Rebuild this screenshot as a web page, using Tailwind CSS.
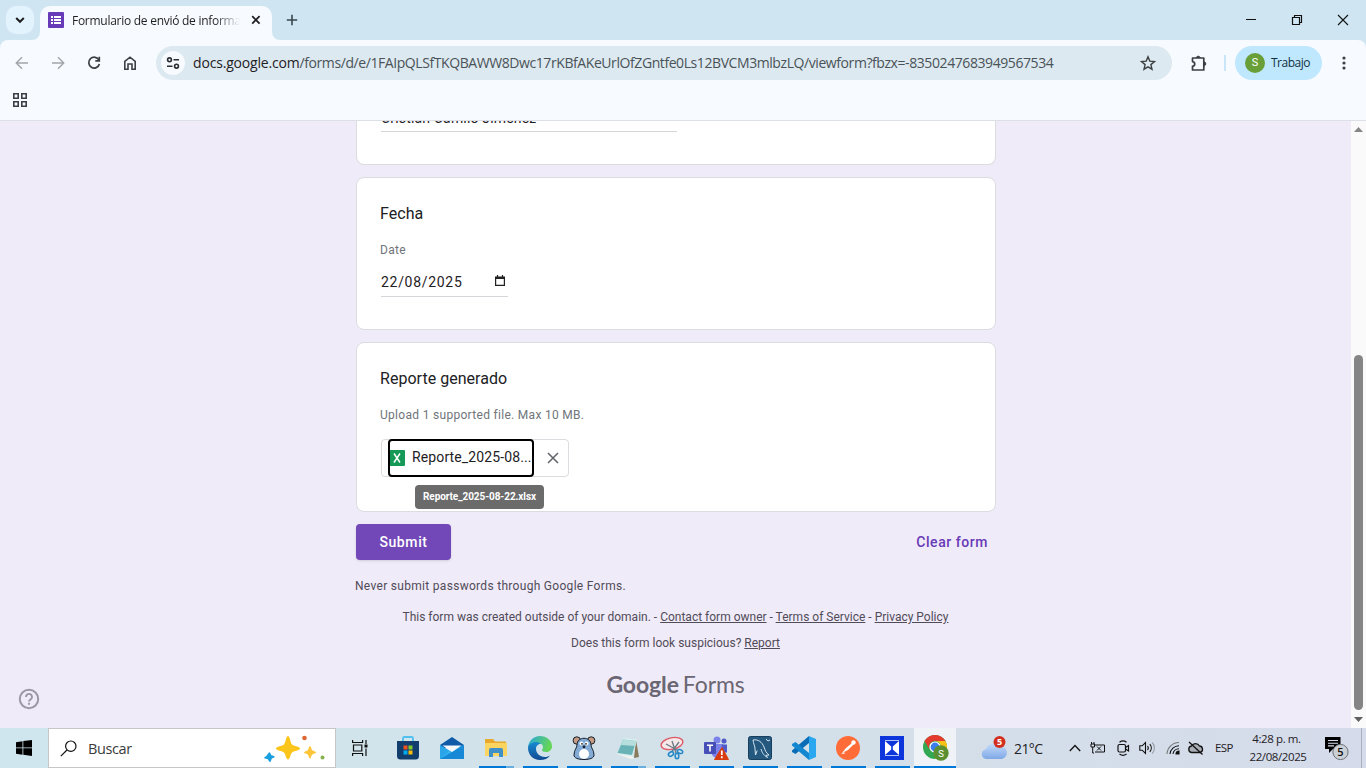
<!DOCTYPE html>
<html lang="es">
<head>
<meta charset="utf-8">
<title>Formulario de envió de información</title>
<script src="https://cdn.jsdelivr.net/npm/@tailwindcss/browser@4"></script>
</head>
<body class="w-[1366px] h-[768px] overflow-hidden flex flex-col bg-[#f0ebf8] font-['Open_Sans',sans-serif] text-[#1f2124]">

<!-- Tab strip -->
<header class="h-10 shrink-0 bg-[#cfe6f2] flex items-start">
  <div class="w-10 pl-1.5 pt-1.5">
    <div class="size-7 rounded-[10px] bg-[#e2f3fe] flex items-center justify-center">
      <svg width="10" height="8" viewBox="0 0 10 8" fill="none" stroke="#1f1f1f" stroke-width="2"><path d="M1.2 2 5 5.8 8.8 2"/></svg>
    </div>
  </div>
  <div class="relative w-[232px] h-[34px] mt-1.5 rounded-t-[10px] bg-[#f7fafe] flex items-center pl-2 pb-1.5">
    <svg class="absolute -left-2 bottom-0" width="8" height="8"><path d="M8 0v8H0a8 8 0 0 0 8-8z" fill="#f7fafe"/></svg>
    <svg class="absolute -right-2 bottom-0" width="8" height="8"><path d="M0 0v8h8a8 8 0 0 1-8-8z" fill="#f7fafe"/></svg>
    <svg width="16" height="16" viewBox="0 0 16 16"><rect width="16" height="16" rx="1" fill="#673ab7"/><path d="M3 4h2v2H3zM6 4h7v2H6zM3 7h2v2H3zM6 7h7v2H6zM3 10h2v2H3zM6 10h7v2H6z" fill="#fff"/></svg>
    <div class="ml-2 w-[168px] overflow-hidden whitespace-nowrap text-[12px] leading-4 pt-px tracking-[-0.27px] bg-linear-to-r from-[#1f1f1f] from-85% to-transparent bg-clip-text text-transparent">Formulario de envió de informa</div>
    <svg class="ml-[11px]" width="10" height="10" viewBox="0 0 10 10" stroke="#1f1f1f" stroke-width="1.8"><path d="M1.2 1.2l7.4 7.4M8.6 1.2 1.2 8.600"/></svg>
  </div>
  <svg class="ml-[14px] mt-[14px]" width="12" height="12" viewBox="0 0 12 12" stroke="#3a474e" stroke-width="1.6"><path d="M6 .8v10.400M.8 6h10.400"/></svg>
  <div class="ml-auto flex items-center mt-[14px] mr-[17px] gap-[34px]">
    <svg width="12" height="12" stroke="#111" stroke-width="1"><path d="M1 5.500h10"/></svg>
    <svg width="12" height="12" fill="none" stroke="#111" stroke-width="1.2"><path d="M1.500 3.500h7v7h-7zM3.500 3.500v-2h7v7h-2"/></svg>
    <svg width="12" height="12" stroke="#111" stroke-width="1.1"><path d="M1 1l10 10M11 1 1 11"/></svg>
  </div>
</header>

<!-- Toolbar -->
<div class="h-20 shrink-0 bg-[#cfe6f2]">
  <div class="h-20 rounded-t-lg bg-[#f7fafe] flex flex-col">
    <div class="h-[46px] flex items-center pl-[14px] pr-4">
      <svg width="16" height="16" viewBox="0 0 16 16" fill="none" stroke="#a3a7ac" stroke-width="1.5"><path d="M14 8H2.500M8 2.300 2.300 8 8 13.700"/></svg>
      <svg class="ml-5" width="16" height="16" viewBox="0 0 16 16" fill="none" stroke="#a3a7ac" stroke-width="1.5"><path d="M2 8h11.500M8 2.300 13.700 8 8 13.700"/></svg>
      <svg class="ml-5" width="16" height="16" viewBox="0 0 16 16" fill="none" stroke="#3c4043" stroke-width="1.7"><path d="M13 5.200A5.400 5.400 0 1 0 13.400 9"/><path d="M13.300 1.800v4h-4"/></svg>
      <svg class="ml-5" width="16" height="16" viewBox="0 0 16 16" fill="none" stroke="#3c4043" stroke-width="1.6"><path d="M2.800 6.300 8 2.200l5.200 4.100v7.900H10V9H6v5.200H2.800z"/></svg>
      <div class="ml-[18px] w-[1016px] h-[34px] rounded-full bg-[#dde9f0] flex items-center pl-1 pr-4">
        <div class="size-6 ml-px rounded-full bg-[#f7fafe] flex items-center justify-center">
          <svg width="14" height="14" viewBox="0 0 14 14" fill="none" stroke="#2b2f33" stroke-width="1.600"><circle cx="3.500" cy="3.800" r="1.900"/><path d="M7.500 3.800H13M1 10.200h5.500"/><circle cx="10.500" cy="10.200" r="1.900"/></svg>
        </div>
        <div class="ml-2 whitespace-nowrap text-[14px] leading-5 text-[#4a5358] tracking-[-0.42px]"><span class="text-[#1f2124] tracking-[-0.18px]">docs.google.com</span>/forms/d/e/1FAIpQLSfTKQBAWW8Dwc17rKBfAKeUrlOfZGntfe0Ls12BVCM3mlbzLQ/viewform?fbzx=-8350247683949567534</div>
        <svg class="ml-auto" width="16" height="16" viewBox="0 0 16 16" fill="none" stroke="#3c4043" stroke-width="1.400"><path d="M8 1.800l1.800 4.300 4.700.4-3.600 3.100 1.100 4.600L8 11.800l-4 2.400 1.100-4.600-3.600-3.100 4.700-.4z"/></svg>
      </div>
      <svg class="ml-[18px]" width="18" height="18" viewBox="0 0 18 18" fill="none" stroke="#3c4043" stroke-width="1.700" stroke-linejoin="round"><path d="M2.500 4h11.300v12H2.500v-3.700c3-.5 3-4.200 0-4.700z"/><path d="M6.200 3.500a2.200 2.200 0 0 1 4 0zM14.500 7.800a2.200 2.200 0 0 1 0 4z" fill="#3c4043" stroke-width="1"/></svg>
      <div class="ml-[16px] w-[2px] h-4 bg-[#c9e6f8]"></div>
      <div class="ml-[9px] w-[87px] h-[34px] rounded-full bg-[#bfe8ff] flex items-center pl-[10px]">
        <div class="size-5 rounded-full bg-[#689f38] text-white text-[11px] leading-5 text-center font-['Roboto',sans-serif]">S</div>
        <div class="ml-1.5 text-[12px] leading-4 tracking-[-0.5px] text-[#123042]">Trabajo</div>
      </div>
      <svg class="ml-[20px]" width="4" height="16" fill="#3c4043"><circle cx="2" cy="3" r="1.600"/><circle cx="2" cy="8" r="1.600"/><circle cx="2" cy="13" r="1.600"/></svg>
    </div>
    <div class="h-[34px] pl-[13px] pt-[7px]">
      <svg width="14" height="14" fill="none" stroke="#3c4043" stroke-width="1.600"><path d="M.8.800h4.400v4.400H.8zM8.800.800h4.400v4.400H8.800zM.8 8.800h4.400v4.400H.8zM8.800 8.800h4.400v4.400H8.800z"/></svg>
    </div>
  </div>
</div>
<div class="h-px shrink-0 bg-[#dcdfe6]"></div>

<!-- Page -->
<div class="h-[607px] shrink-0 flex">
  <div class="flex-1 flex font-['Roboto',sans-serif]">
    <div class="w-[356px] flex items-end pl-[18px] pb-[18px]">
      <svg width="22" height="22" viewBox="0 0 22 22" fill="none" stroke="#9b97a4" stroke-width="2"><circle cx="11" cy="11" r="9.200"/><path d="M8 9a3 3 0 1 1 4.800 2.300c-1.100.8-1.800 1.300-1.800 2.300" stroke-width="1.900"/><path d="M11 14.800v2"/></svg>
    </div>
    <main class="w-[640px] flex flex-col">
      <section class="h-11 rounded-b-lg border border-t-0 border-[#dadce0] bg-white px-6 overflow-hidden">
        <div class="w-[296px] h-[11px] border-b border-[#d5d6da] flex items-end"><div class="text-[14px] leading-5 tracking-[0.17px] whitespace-nowrap mb-[3px]">Cristian Camilo Jiménez</div></div>
      </section>
      <section class="mt-3 h-[153px] rounded-lg border border-[#dadce0] bg-white px-6 pt-6">
        <h2 class="-ml-px text-[16px] leading-6 tracking-[0.05px] text-[#202124]">Fecha</h2>
        <div class="-ml-px mt-4 text-[12px] leading-4 tracking-[0.3px] text-[#70757a]">Date</div>
        <div class="mt-2 w-[127px] h-[31px] border-b border-[#d5d6da] flex items-center justify-between pr-[3px] pt-0.5">
          <span class="text-[14px] leading-5 tracking-[0.7px]">22/08/2025</span>
          <svg class="mb-1" width="10" height="11" viewBox="0 0 10 11" fill="none" stroke="#222" stroke-width="1.200"><path d="M.6 2h8.800v8.400H.6z"/><path d="M.6 3h8.800" stroke-width="2"/><path d="M2.500 0v2M7.500 0v2"/></svg>
        </div>
      </section>
      <section class="mt-3 h-[170px] rounded-lg border border-[#dadce0] bg-white px-6 pt-6">
        <h2 class="-ml-px text-[16px] leading-6 tracking-[0.03px] text-[#202124]">Reporte generado</h2>
        <div class="-ml-px mt-4 text-[12px] leading-4 tracking-[0.3px] text-[#70757a]">Upload 1 supported file. Max 10 MB.</div>
        <div class="relative mt-4 w-[188px] h-[38px] rounded border border-[#dadce0] flex items-center pl-1.5">
          <div class="w-[146px] h-[38px] -my-px rounded border-2 border-black flex items-center">
            <svg class="shrink-0" width="15" height="16" viewBox="0 0 15 16"><path d="M0 0h14a1 1 0 0 1 1 1v14a1 1 0 0 1-1 1H0z" fill="#159957"/><path d="M4 3.500l6 9M10 3.500l-6 9" stroke="#fff" stroke-width="1.500"/></svg>
            <span class="ml-[7px] mb-0.5 text-[14px] leading-5 tracking-[0.12px] whitespace-nowrap">Reporte_2025-08...</span>
          </div>
          <svg class="ml-[13px]" width="12" height="12" stroke="#5f6368" stroke-width="1.500"><path d="M1 1l10 10M11 1 1 11"/></svg>
          <div class="absolute left-[33px] top-[45px] w-[129px] h-6 rounded-sm bg-[#6b6b6b] text-white text-center text-[10px] leading-6 font-bold tracking-[-0.08px]">Reporte_2025-08-22.xlsx</div>
        </div>
      </section>
      <div class="mt-3 h-9 flex justify-between items-center">
        <div class="w-[95px] h-9 rounded bg-[#7248b9] shadow-sm text-white text-center text-[14px] leading-9 font-medium tracking-[0.6px]">Submit</div>
        <div class="pr-2 text-[14px] leading-5 font-medium tracking-[0.55px] text-[#673ab7]">Clear form</div>
      </div>
      <div class="-ml-px mt-[18px] text-[12px] leading-4 tracking-[0.3px] text-[#504c59]">Never submit passwords through Google Forms.</div>
      <div class="-ml-px mt-[15px] text-center text-[12px] leading-4 text-[#504c59]">This form was created outside of your domain. - <span class="underline">Contact form owner</span> - <span class="underline">Terms of Service</span> - <span class="underline">Privacy Policy</span></div>
      <div class="-ml-px mt-[10px] text-center text-[12px] leading-4 text-[#504c59]">Does this form look suspicious? <span class="underline">Report</span></div>
      <div class="-ml-px mt-[17px] flex justify-center items-baseline gap-1 text-[#6a6673] text-[23px] leading-8"><span class="font-['Lato',sans-serif] font-bold tracking-[-0.1px]">Google</span><span class="font-['Lato',sans-serif] tracking-[-0.1px]">Forms</span></div>
    </main>
  </div>
  <div class="w-[15px] bg-[#fafafb] flex flex-col items-center pt-1.5 pb-1">
    <svg width="9" height="5" fill="#858585"><path d="M0 5 4.500 0 9 5z"/></svg>
    <div class="mt-[223px] w-[9px] h-[355px] rounded-full bg-[#858585]"></div>
    <svg class="mt-auto mb-[2px]" width="9" height="5" fill="#606060"><path d="M0 0h9L4.500 5z"/></svg>
  </div>
</div>

<!-- Taskbar -->
<footer class="h-10 shrink-0 flex bg-linear-to-r from-[#cfe6ee] via-[#d3e1e9] to-[#d5dbea]">
  <div class="w-12 flex items-center justify-center">
    <svg width="16" height="16" viewBox="0 0 16 16"><path d="M0 2.200 6.500 1.200v6.300H0zM7.300 1.100 16 0v7.500H7.300zM0 8.300h6.500v6.400L0 13.700zM7.300 8.300H16V16l-8.700-1.200z"/></svg>
  </div>
  <div class="w-72 h-10 bg-white border border-[#c4c6c8] flex items-center pl-[11px]">
    <svg width="17" height="17" viewBox="0 0 17 17" fill="none" stroke="#111" stroke-width="1.200"><circle cx="10.800" cy="6.200" r="5.200"/><path d="M7 10 .8 16.200"/></svg>
    <span class="ml-[11px] pt-0.5 text-[14.500px] tracking-[-0.4px] text-[#3a3a3a]">Buscar</span>
    <svg class="ml-auto mr-[9px]" width="62" height="28" viewBox="0 0 62 28"><path d="M24 2c2 0 2.500 7 4 8.500s8 2 8 4-6.500 2.500-8 4-2 7-4 7-2.500-5.500-4-7-8-2-8-4 6.500-2.500 8-4S22 2 24 2z" fill="#fcc51b"/><path d="M46 12c1 0 1.500 3.500 2.200 4.200S52 17.500 52 18.500s-3 1.300-3.800 2S47 24.500 46 24.500s-1.400-3.300-2.200-4-3.800-1-3.800-2 3-1.500 3.800-2.300S45 12 46 12z" fill="#fdc537"/><path d="M5.500 19l1.300 2.800 3 1-2.600 1.400-1.200 3-1.800-2.600-3.200-.8 2.200-1.800z" fill="#1a9fe0" stroke="#1a9fe0" stroke-linejoin="round" stroke-width="1.500"/><circle cx="40.500" cy="4" r="2.300" fill="#dd6632"/><circle cx="58.500" cy="23.500" r="2" fill="#86b24c"/></svg>
  </div>
  <div class="w-12 mr-0.5 flex items-center justify-center">
    <svg width="16" height="16" viewBox="0 0 16 16" fill="none" stroke="#111" stroke-width="1.200"><path d="M.6 0v2.500h10V0M.6 16v-2.500h10V16M1.500 5h8.300v6H1.500zM14 0v4M14 8.500V16"/><path d="M12.500 4.500h3v3h-3z" fill="#111" stroke="none"/></svg>
  </div>
  <div class="flex">
    <!-- Store -->
    <div class="w-11 flex items-center justify-center"><svg width="24" height="24" viewBox="0 0 24 24"><path d="M7 6V2.500A1.500 1.500 0 0 1 8.500 1h7A1.500 1.500 0 0 1 17 2.500V6" fill="none" stroke="#4fc0ee" stroke-width="1.800"/><path d="M1 5h22v15a3.500 3.500 0 0 1-3.500 3.500h-15A3.500 3.500 0 0 1 1 20z" fill="#123e6e"/><path d="M7.500 9.500h4v4h-4z" fill="#f1511b"/><path d="M12.500 9.500h4v4h-4z" fill="#80cc28"/><path d="M7.500 14.500h4v4h-4z" fill="#00adef"/><path d="M12.500 14.500h4v4h-4z" fill="#fbbc09"/></svg></div>
    <!-- Mail -->
    <div class="w-11 flex items-center justify-center"><svg width="24" height="24" viewBox="0 0 24 24"><path d="M0 9 12 1l12 8-2 3H2z" fill="#105ba8"/><path d="M0 9l24 14H0z" fill="#2aa5e8"/><path d="M24 9v14H0l9-8z" fill="#33b2ef"/><path d="M0 23 24 9v14z" fill="#1688d6"/><path d="M2.500 9.500h19L12 16z" fill="#f4f8fb"/></svg></div>
    <!-- Explorer -->
    <div class="w-11 relative flex items-center justify-center"><svg width="22" height="20" viewBox="0 0 22 20"><path d="M0 1h8l2 2.500h11V9H0z" fill="#e8a92d"/><path d="M0 5h22v13H0z" fill="#fcd462"/><path d="M4 19v-7a2 2 0 0 1 2-2h10a2 2 0 0 1 2 2v7h-4v-4H8v4z" fill="#3f8fc9"/></svg><div class="absolute bottom-0 left-[5px] w-[27px] h-0.5 bg-[#0078d7]"></div><div class="absolute bottom-0 left-8 w-2 h-0.5 bg-[#6aaede]"></div></div>
    <!-- Edge -->
    <div class="w-11 relative flex items-center justify-center"><svg width="24" height="24" viewBox="0 0 24 24"><defs><linearGradient id="e1" x1="0" y1="0" x2="1" y2=".3"><stop offset="0" stop-color="#2aa5df"/><stop offset="1" stop-color="#64d657"/></linearGradient><linearGradient id="e2" x1="0" y1="0" x2="0" y2="1"><stop offset="0" stop-color="#178bd1"/><stop offset="1" stop-color="#114a92"/></linearGradient></defs><path d="M0 12C0 5 5.500 0 12 0s12 4.500 12 10c0 4-3 6-6 6-2.500 0-4-1-4-2s1-1 1-3-2-4-5-4c-5 0-9 3-10 5z" fill="url(#e1)"/><path d="M0 12c.5-3.500 4-6 8-6 2 0 4 .7 5 2-3-.5-5 2-5 5 0 5 5 8 9 8 2 0 3.500-.7 5-1.500C20 22.500 16.500 24 12 24 5 24 0 18.500 0 12z" fill="url(#e2)"/></svg><div class="absolute bottom-0 left-[5px] w-[35px] h-0.5 bg-[#0078d7]"></div></div>
    <!-- Mouse -->
    <div class="w-11 relative flex items-center justify-center"><svg width="24" height="24" viewBox="0 0 24 24" stroke="#15202b" stroke-width="1"><circle cx="4.800" cy="4.500" r="3.700" fill="#c59b84"/><circle cx="19.200" cy="4.500" r="3.700" fill="#c59b84"/><path d="M5 9c0-9 14-9 14 0 0 3 3 5 3 10 0 3-4 4.500-10 4.500S2 22 2 19c0-5 3-7 3-10z" fill="#83abd6"/><ellipse cx="12" cy="18" rx="5" ry="5" fill="#fff" stroke="none"/><g stroke="none"><circle cx="9.500" cy="7.500" r="2" fill="#fff"/><circle cx="14.500" cy="7.500" r="2" fill="#fff"/><circle cx="10" cy="7.800" r=".9" fill="#15202b"/><circle cx="14" cy="7.800" r=".9" fill="#15202b"/><circle cx="12" cy="10.800" r="1.400" fill="#15202b"/></g></svg><div class="absolute bottom-0 left-[5px] w-[35px] h-0.5 bg-[#0078d7]"></div></div>
    <!-- Notepad -->
    <div class="w-11 relative flex items-center justify-center"><svg width="24" height="24" viewBox="0 0 24 24"><path d="M20 4l3 17-5 1z" fill="#8a7a5c"/><path d="M7 2l14 1.500L16.500 21 1 18z" fill="#d9f0ef"/><path d="M7 3.500l13 1.500-4 14L1.500 17z" fill="#69b3b7"/><path d="M7 3.500l13 1.500-1.500 5L5 9z" fill="#b5dedd"/><path d="M1 18l16 3 1 1.500-3 .5z" fill="#f4f4ee"/></svg><div class="absolute bottom-0 left-[5px] w-[27px] h-0.5 bg-[#0078d7]"></div><div class="absolute bottom-0 left-8 w-2 h-0.5 bg-[#6aaede]"></div></div>
    <!-- Snipping tool -->
    <div class="w-11 relative flex items-center justify-center"><svg width="24" height="24" viewBox="0 0 24 24" fill="none"><ellipse cx="12" cy="7.500" rx="11" ry="5.800" transform="rotate(-12 12 7.500)" fill="#f6e7e9" stroke="#dc5a64" stroke-width="1.400"/><path d="M12 5l4 12M19 6 12 15.500M6 8l11 6" stroke="#6b7b86" stroke-width="1.300"/><ellipse cx="11" cy="18" rx="2.800" ry="1.900" transform="rotate(-35 11 18)" stroke="#2487c7" stroke-width="1.600"/><ellipse cx="17" cy="20" rx="1.800" ry="2.700" stroke="#2487c7" stroke-width="1.600"/><ellipse cx="20" cy="15.500" rx="2.800" ry="1.800" transform="rotate(20 20 15.500)" stroke="#2487c7" stroke-width="1.500"/></svg><div class="absolute bottom-0 left-[5px] w-[35px] h-0.5 bg-[#0078d7]"></div></div>
    <!-- Teams -->
    <div class="w-11 relative flex items-center justify-center"><svg width="26" height="24" viewBox="0 0 26 24"><circle cx="14" cy="4" r="3.500" fill="#7b83eb"/><circle cx="21" cy="5" r="2.500" fill="#5059c9"/><path d="M9 8h11v9a6 6 0 0 1-11 2z" fill="#7b83eb"/><path d="M19 8.500h5v8h-5z" fill="#5059c9"/><rect x="1" y="6" width="12" height="12" rx="1" fill="#464eb8"/><path d="M4 9.200h6M7 9.200V15.500" stroke="#fff" stroke-width="1.600"/><path d="M19 11.500 25.500 23.500h-14z" fill="#d83b10" stroke="#d83b10" stroke-linejoin="round"/><path d="M18.800 14.500v4.500M18.800 20.300v1.900" stroke="#fff" stroke-width="1.700"/></svg><div class="absolute bottom-0 left-[5px] w-[35px] h-0.5 bg-[#0078d7]"></div></div>
    <!-- MySQL Workbench -->
    <div class="w-11 relative flex items-center justify-center"><svg width="24" height="24" viewBox="0 0 24 24"><rect x=".5" y=".5" width="23" height="23" rx="2" fill="#24587f" stroke="#173f5e"/><path d="M5 4c5-1 9 2 11 7 1 3 2 6 5 8l-3 .3 1.500 2.200C15 19 14 16 13 13M5 4c.5 4 2 6 2 9l.5 6 1.700-4.500M18 3l2 2 2-1" fill="none" stroke="#d5e4ee" stroke-width="1"/></svg><div class="absolute bottom-0 left-[5px] w-[35px] h-0.5 bg-[#0078d7]"></div></div>
    <!-- VS Code -->
    <div class="w-11 relative flex items-center justify-center"><svg width="24" height="24" viewBox="0 0 24 24"><path d="M17 0l7 3v18l-7 3z" fill="#2aa7ef"/><path d="M17 0v7L3.500 18 0 16v-1.500z" fill="#0b6db5"/><path d="M17 24v-7L3.500 6 0 8v1.500z" fill="#1387cf"/></svg><div class="absolute bottom-0 left-[5px] w-[35px] h-0.5 bg-[#0078d7]"></div></div>
    <!-- Postman -->
    <div class="w-11 relative flex items-center justify-center"><svg width="24" height="24" viewBox="0 0 24 24"><circle cx="12" cy="12" r="12" fill="#ff6c37"/><path d="M6 17l4-5 6-5 1.500 1.500L12 14l-4 2z" fill="#fff"/><circle cx="17.500" cy="6.500" r="2.200" fill="#fff"/><path d="M5 18l3-2 1 1.500z" fill="#fff"/></svg><div class="absolute bottom-0 left-[5px] w-[35px] h-0.5 bg-[#0078d7]"></div></div>
    <!-- Blue bow-tie app -->
    <div class="w-11 relative flex items-center justify-center"><svg width="24" height="24" viewBox="0 0 24 24"><path d="M0 0h24v24H0z" fill="#0c36dc"/><path d="M5 5v14l6.200-5.500v-3zM19 5v14l-6.200-5.500v-3z" fill="#fff"/><path d="M5 4.500h14M5 19.500h14" stroke="#dfe5fb" stroke-width=".8"/></svg><div class="absolute bottom-0 left-[5px] w-[35px] h-0.5 bg-[#0078d7]"></div></div>
    <!-- Chrome -->
    <div class="w-[42px] relative flex items-center justify-center bg-[#eff3f7]"><svg class="ml-0.5" width="28" height="26" viewBox="0 0 28 26"><circle cx="13" cy="12" r="12" fill="#33a852"/><path d="M2.600 6 13 0l10.400 6H13a6 6 0 0 0-5.200 9z" fill="#e33b2e"/><path d="M23.400 6A12 12 0 0 1 13 24l5.200-9A6 6 0 0 0 13 6z" fill="#fbc116"/><path d="M2.600 6A12 12 0 0 1 23.400 6H13z" fill="#e33b2e"/><circle cx="13" cy="12" r="5.600" fill="#fff"/><circle cx="13" cy="12" r="4.400" fill="#3b7ded"/><circle cx="19" cy="18" r="7.700" fill="#5c8f31"/><text x="19" y="21.500" font-family="Roboto" font-size="9.500" fill="#fff" text-anchor="middle">S</text></svg><div class="absolute bottom-0 left-0 w-[42px] h-0.5 bg-[#0078d7]"></div></div>
  </div>
  <!-- Weather and tray -->
  <div class="ml-auto flex items-center">
    <svg width="26" height="26" viewBox="0 0 26 26"><defs><linearGradient id="c1" x1="0" y1="0" x2="0" y2="1"><stop offset="0" stop-color="#c4dcfb"/><stop offset="1" stop-color="#7fa7e6"/></linearGradient></defs><path d="M6 24a5 5 0 0 1-.5-10A7 7 0 0 1 18 11.500a6 6 0 0 1 3 12.500z" fill="url(#c1)"/><circle cx="18.500" cy="7" r="6" fill="#d32f1f"/><text x="18.500" y="10.300" font-family="Open Sans" font-weight="700" font-size="9" fill="#fff" text-anchor="middle">5</text></svg>
    <span class="ml-[7px] w-[30px] text-[14px] tracking-[-0.6px] whitespace-nowrap">21°C</span>
    <svg class="ml-[25px]" width="12" height="8" fill="none" stroke="#111" stroke-width="1.300"><path d="M.8 7 6 1.500 11.200 7"/></svg>
    <svg class="ml-[9px]" width="16" height="14" viewBox="0 0 16 14" fill="none" stroke="#111"><path d="M5 4h9.500v7H5M1 3h3.500v3H1zM1.500 1v2M4 1v2M2.700 6v6H4M7 5.500l4 4M11 5.500l-4 4"/></svg>
    <svg class="ml-[11px]" width="13" height="16" viewBox="0 0 13 16" fill="none" stroke="#111" stroke-width="1.200"><rect x="1" y="4.500" width="7.500" height="7.500" rx="1.500"/><path d="M8.500 7.500 11.500 5.500v5.500L8.500 9M2.500 2.200c2-1.500 5-1.500 7 0M2.500 14c2 1.500 5 1.500 7 0"/></svg>
    <svg class="ml-[9px]" width="17" height="14" viewBox="0 0 17 14" fill="none" stroke="#111" stroke-width="1.100"><path d="M.8 4.800h2.400L6.500 1.500v11L3.200 9.200H.8zM8.500 5c1 1.200 1 2.800 0 4M10.800 3.200c2 2.200 2 5.400 0 7.600"/><path d="M13.200 1.500c3 3.200 3 7.800 0 11" stroke="#9aa0a8"/></svg>
    <svg class="ml-[10px]" width="14" height="14" viewBox="0 0 14 14" fill="none" stroke="#111" stroke-width="1.100"><path d="M1 13A12 12 0 0 1 13 1.500" stroke="#777"/><path d="M4 13a9 9 0 0 1 9-8.300M7 13a6 6 0 0 1 6-5.200"/><path d="M10 13a3 3 0 0 1 3-3v3z" fill="#111"/></svg>
    <svg class="ml-[7px]" width="17" height="14" viewBox="0 0 17 14" fill="none" stroke="#111" stroke-width="1.300"><path d="M4.500 11.500a3.300 3.300 0 0 1 0-6.500 4.500 4.500 0 0 1 8 0 3.300 3.300 0 0 1 .5 6.500z" fill="#a9adb5"/><path d="M2 1l13.500 12.500"/></svg>
    <span class="ml-[11px] w-[19px] text-[11.500px] tracking-[-0.65px]">ESP</span>
    <div class="ml-[14px] w-[60px] text-center text-[11.500px] leading-[18px] tracking-[-0.4px] whitespace-nowrap"><div class="pr-[3px]">4:28 p. m.</div><div>22/08/2025</div></div>
    <svg class="ml-[16px]" width="26" height="26" viewBox="0 0 26 26"><path d="M1 2h15.500v12H9l-4 4v-4H1z" fill="#000"/><path d="M4 5.500h10M4 8.200h10M4 10.900h6" stroke="#d5dbea" stroke-width="1.100"/><circle cx="16.500" cy="17" r="7.600" fill="#cbcfd6" stroke="#6d7178"/><text x="16.500" y="21" font-family="Open Sans" font-size="11" font-weight="600" fill="#111" text-anchor="middle">5</text></svg>
    <div class="ml-[11px] mr-1 w-px h-10 bg-[#a9b0bb]"></div>
  </div>
</footer>
</body>
</html>
